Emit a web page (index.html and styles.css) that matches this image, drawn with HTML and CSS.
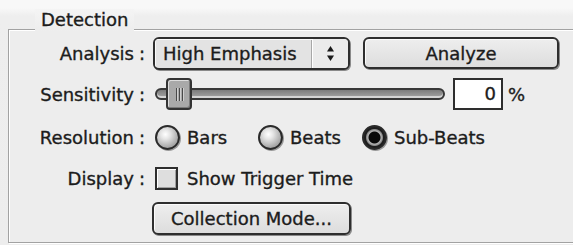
FILE: index.html
```html
<!DOCTYPE html>
<html>
<head>
<meta charset="utf-8">
<link rel="stylesheet" href="styles.css">
</head>
<body>
<div class="group">
  <div class="legend">Detection</div>
  <div class="grid">
    <div class="label">Analysis<span class="colon">:</span></div>
    <div class="controls">
      <div class="popup">
        <span class="popup-text">High Emphasis</span>
        <span class="popup-arrows">
          <svg width="9" height="17" viewBox="0 0 9 17"><path d="M4.5 1 L8 6.5 L1 6.5 Z" fill="#1a1a1a"/><path d="M4.5 16 L8 10.5 L1 10.5 Z" fill="#1a1a1a"/></svg>
        </span>
      </div>
      <div class="button analyze">Analyze</div>
    </div>

    <div class="label">Sensitivity<span class="colon">:</span></div>
    <div class="controls">
      <div class="slider">
        <div class="track"></div>
        <div class="thumb"><span></span><span></span><span></span></div>
      </div>
      <div class="field">0</div>
      <div class="pct">%</div>
    </div>

    <div class="label">Resolution<span class="colon">:</span></div>
    <div class="controls radios">
      <div class="opt o1"><span class="radio"></span><span class="opt-text">Bars</span></div>
      <div class="opt o2"><span class="radio"></span><span class="opt-text">Beats</span></div>
      <div class="opt"><span class="radio on"></span><span class="opt-text">Sub-Beats</span></div>
    </div>

    <div class="label">Display<span class="colon">:</span></div>
    <div class="controls">
      <span class="check"></span><span class="check-text">Show Trigger Time</span>
    </div>

    <div class="label"></div>
    <div class="controls">
      <div class="button collection">Collection Mode...</div>
    </div>
  </div>
</div>
</body>
</html>
```

FILE: styles.css
```css
html, body {
  margin: 0;
  padding: 0;
}
body {
  width: 573px;
  height: 245px;
  overflow: hidden;
  background: linear-gradient(#f8f8f8 0, #f8f8f8 8px, #eeeeee 16px, #ededed 100%);
  font-family: "DejaVu Sans", Verdana, sans-serif;
  font-size: 18px;
  color: #1c1c1c;
  -webkit-text-stroke: 0.35px #1c1c1c;
  padding-top: 29px;
  box-sizing: border-box;
}
.group {
  position: relative;
  margin-left: 8px;
  width: 559px;
  height: 206px;
  border: 1px solid #a2a2a2;
  box-shadow: inset 1px 1px 0 #ffffff, 1px 1px 0 #ffffff;
  padding: 6px 0 0 10px;
  box-sizing: content-box;
  background: #ededed;
}
.legend {
  position: absolute;
  top: -21px;
  left: 26px;
  padding: 0 6px;
  line-height: 22px;
  background: linear-gradient(#f4f4f4, #ededed);
}
.grid {
  display: grid;
  grid-template-columns: 126px auto;
  grid-template-rows: 34px 48px 38px 44px 36px;
  column-gap: 8px;
  align-items: center;
}
.label {
  text-align: right;
  white-space: nowrap;
}
.colon {
  margin-left: 5px;
}
.controls {
  display: flex;
  align-items: center;
  white-space: nowrap;
}

/* popup */
.popup {
  width: 197px;
  height: 33px;
  box-sizing: border-box;
  border: 2px solid #2e2e2e;
  border-radius: 6px;
  box-shadow: 1px 1px 0 #8a8a8a;
  display: flex;
  overflow: hidden;
  background: #e3e3e3;
}
.popup-text {
  flex: 1;
  display: flex;
  align-items: center;
  padding-left: 8px;
  box-shadow: inset 1px 1px 0 #fafafa, inset -1px 0 0 #a8a8a8;
}
.popup-arrows {
  width: 36px;
  display: flex;
  align-items: center;
  justify-content: center;
  background: #ebebeb;
  box-shadow: inset 1px 0 0 #ffffff;
}

/* buttons */
.button {
  box-sizing: border-box;
  border: 2px solid #2e2e2e;
  border-radius: 6px;
  background: linear-gradient(#eeeeee, #dddddd);
  box-shadow: inset 1px 1px 0 #fbfbfb, 1px 1px 0 #8a8a8a;
  display: flex;
  align-items: center;
  justify-content: center;
}
.analyze {
  margin-left: 13px;
  width: 196px;
  height: 32px;
}
.collection {
  margin-left: -1px;
  width: 199px;
  height: 33px;
}

/* slider */
.slider {
  position: relative;
  margin-left: 2px;
  width: 290px;
  height: 34px;
  display: flex;
  align-items: center;
}
.track {
  width: 100%;
  height: 12px;
  box-sizing: border-box;
  border: 2px solid #383838;
  border-radius: 6px;
  background: linear-gradient(#7c7c7c, #a6a6a6);
  box-shadow: inset 0 -2px 0 #d4d4d4;
}
.thumb {
  position: absolute;
  left: 11px;
  top: 1px;
  width: 26px;
  height: 32px;
  box-sizing: border-box;
  border: 2px solid #333333;
  border-radius: 4px;
  background: #a9a9a9;
  box-shadow: inset 1px 1px 0 #dcdcdc, inset -1px -1px 0 #7a7a7a;
  display: flex;
  justify-content: center;
  align-items: center;
  gap: 2px;
}
.thumb span {
  width: 1px;
  height: 13px;
  background: #4a4a4a;
  box-shadow: 1px 0 0 #d0d0d0;
}
.field {
  margin-left: 8px;
  width: 50px;
  height: 32px;
  box-sizing: border-box;
  border: 2px solid #2e2e2e;
  background: #ffffff;
  text-align: right;
  padding-right: 5px;
  line-height: 28px;
}
.pct {
  margin-left: 5px;
}

/* radios */
.radios {
  display: grid;
  grid-template-columns: 103px 104px auto;
  margin-left: 2px;
}
.opt {
  display: flex;
  align-items: center;
}
.radio {
  width: 25px;
  height: 25px;
  box-sizing: border-box;
  border-radius: 50%;
  border: 2px solid #2a2a2a;
  background: radial-gradient(circle at 40% 35%, #ffffff 0, #e6e6e6 25%, #a8a8a8 70%, #8a8a8a 100%);
  box-shadow: 1px 1px 0 #9a9a9a;
}
.radio.on {
  background: radial-gradient(circle, #0a0a0a 0, #0a0a0a 5.5px, #b8b8b8 6.5px, #8a8a8a 8px, #1e1e1e 9px);
}
.opt-text {
  margin-left: 7px;
}

/* checkbox */
.check {
  margin-left: 2px;
  width: 23px;
  height: 23px;
  box-sizing: border-box;
  border: 2px solid #2e2e2e;
  background: #dedede;
  box-shadow: inset 1px 1px 0 #ffffff, inset -1px -1px 0 #a0a0a0;
}
.check-text {
  margin-left: 9px;
}
```
